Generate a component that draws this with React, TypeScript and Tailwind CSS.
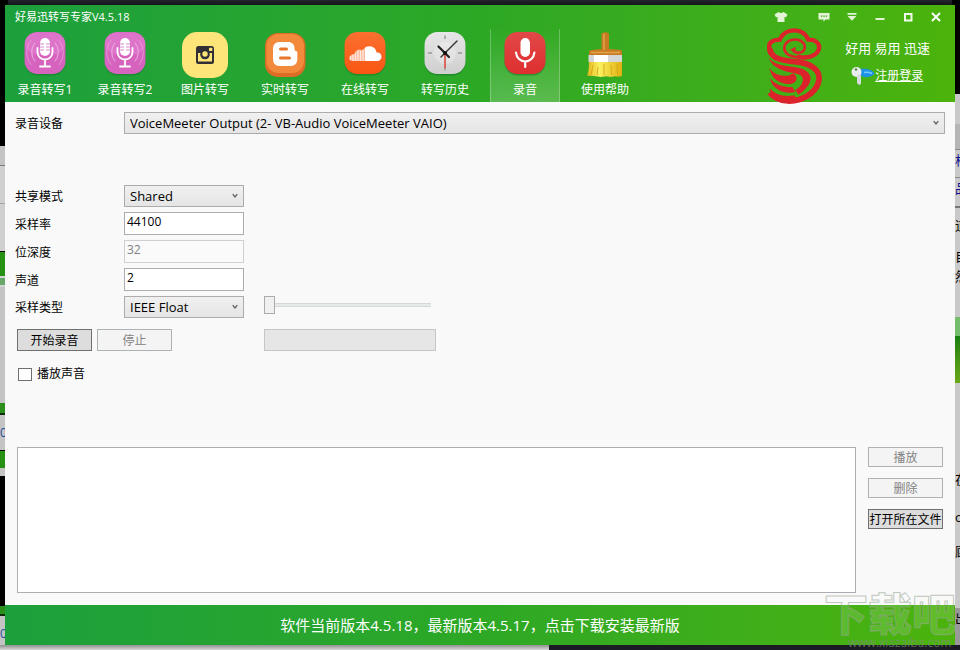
import React from "react";

interface NavItem {
  label: string;
  icon: React.ReactNode;
  active?: boolean;
}

const StudioMicIcon = () => (
  <svg viewBox="0 0 48 47" className="w-12 h-[47px]" fill="none">
    <rect x="3.5" y="2.5" width="41" height="42" rx="13" fill="#15702b" opacity=".45" />
    <rect x="3.5" y="1" width="41" height="42" rx="13" fill="#d664bf" />
    <rect x="4" y="1.5" width="40" height="22" rx="12" fill="#dd74c9" />
    <g stroke="#ecaee0" strokeWidth="1.1" strokeLinecap="round" opacity=".8">
      <path d="M14 12a14 14 0 0 0 0 18M34 12a14 14 0 0 1 0 18" />
      <path d="M10 9.500a19 19 0 0 0 0 24M38 9.500a19 19 0 0 1 0 24" opacity=".7" />
    </g>
    <rect x="19" y="7" width="10" height="18" rx="5" fill="#fff" />
    <path d="M19 13h4M19 16h4M19 19h4M25 13h4M25 16h4M25 19h4" stroke="#d98acb" strokeWidth="1" />
    <path d="M16.500 17v4a7.500 7.500 0 0 0 15 0v-4M24 29v6M19 35.500h10" stroke="#fff" strokeWidth="1.800" strokeLinecap="round" />
  </svg>
);

const PhotoIcon = () => (
  <svg viewBox="0 0 48 47" className="w-12 h-[47px]">
    <rect x="1" y="1" width="46" height="46" rx="15" fill="#fee57a" />
    <rect x="15" y="15" width="18" height="18" rx="2.500" fill="#2f2f35" />
    <path d="M17 22h3.200a4.200 4.200 0 1 0 7.600 0H31v8.500H17z" fill="#fee57a" />
    <circle cx="24" cy="23.500" r="4.800" fill="#2f2f35" />
    <circle cx="24" cy="23" r="2.700" fill="#fee57a" />
    <rect x="28" y="16.800" width="3.300" height="3.300" rx=".5" fill="#fee57a" />
  </svg>
);

const BloggerIcon = () => (
  <svg viewBox="0 0 48 47" className="w-12 h-[47px]">
    <rect x="4" y="2" width="40.500" height="44" rx="13" fill="#dc6c26" />
    <rect x="5.500" y="3" width="37.500" height="39" rx="12" fill="#f28a3c" />
    <path d="M19 11h8c4 0 6.500 2.500 6.500 6 0 2.500.5 3 2 3.200.7.200.8.600.8 1.300V28c0 4.500-2.500 7-7 7H19c-4.500 0-7-2.500-7-7V18c0-4.500 2.500-7 7-7z" fill="#fff" />
    <path d="M19.500 18h6M19.500 27h9" stroke="#e9772b" strokeWidth="3" strokeLinecap="round" />
  </svg>
);

const CloudIcon = () => (
  <svg viewBox="0 0 48 47" className="w-12 h-[47px]">
    <defs>
      <linearGradient id="cloudBg" x1="0" y1="0" x2="0" y2="1">
        <stop stopColor="#fb7030" />
        <stop offset="1" stopColor="#fa5512" />
      </linearGradient>
    </defs>
    <rect x="3.500" y="2.500" width="41" height="42" rx="13" fill="#15702b" opacity=".45" />
    <rect x="3.500" y="1" width="41" height="42" rx="13" fill="url(#cloudBg)" />
    <path d="M24 16.500c5-3 11-.5 11.500 5 3-.5 5 1.500 5 4.200S38.200 30 36 30H24z" fill="#fff" />
    <path d="M10 24c1-1 2.500-1 3.500-1 .5-4 5-5.500 8-3.500L24 16.500V30H11c-3 0-3.500-4-1-6z" fill="#fff" opacity=".55" />
    <path d="M9.500 25v4M12 24v6M14.500 22v8M17 19.500V30M19.500 20V30M22 18.500V30" stroke="#fff" strokeWidth="1.300" opacity=".7" />
  </svg>
);

const ClockIcon = () => (
  <svg viewBox="0 0 48 47" className="w-12 h-[47px]" fill="none">
    <defs>
      <linearGradient id="clockBg" x1="0" y1="0" x2="0" y2="1">
        <stop stopColor="#e6e6e6" />
        <stop offset="1" stopColor="#cfcfcf" />
      </linearGradient>
    </defs>
    <rect x="3.500" y="2.500" width="41" height="42" rx="13" fill="#15702b" opacity=".5" />
    <rect x="3.500" y="1" width="41" height="42" rx="13" fill="url(#clockBg)" />
    <circle cx="24" cy="22" r="11" fill="#fff" opacity=".25" />
    <path d="M24 4.500V8M24 36v3.500M7 22h4M37 22h4" stroke="#999" strokeWidth="1.500" />
    <path d="M24 22v15" stroke="#dd4a43" strokeWidth="1.600" />
    <path d="M20 26 36 10" stroke="#3b3b3b" strokeWidth="1.500" strokeLinecap="round" />
    <path d="m28 26-10.500-10.500" stroke="#222" strokeWidth="2.200" strokeLinecap="round" />
    <circle cx="24" cy="22" r="2" fill="#111" />
  </svg>
);

const RecordIcon = () => (
  <svg viewBox="0 0 48 47" className="w-12 h-[47px]" fill="none">
    <defs>
      <linearGradient id="recordBg" x1="0" y1="0" x2="0" y2="1">
        <stop stopColor="#e24848" />
        <stop offset="1" stopColor="#de2f2f" />
      </linearGradient>
    </defs>
    <rect x="3.500" y="2.500" width="41" height="42" rx="13" fill="#15702b" opacity=".5" />
    <rect x="3.500" y="1" width="41" height="42" rx="13" fill="url(#recordBg)" />
    <rect x="19.500" y="7" width="9.500" height="19" rx="4.700" fill="#fff" />
    <path d="M15 21.500c.5 5.500 4.500 9 9.200 9s8.700-3.500 9.200-9M24.200 31v5" stroke="#fff" strokeWidth="2.200" strokeLinecap="round" />
  </svg>
);

const BrushIcon = () => (
  <svg viewBox="0 0 48 47" className="w-12 h-[47px]">
    <defs>
      <linearGradient id="bristle" x1="0" y1="0" x2="1" y2="0">
        <stop stopColor="#e3b41c" />
        <stop offset=".35" stopColor="#fbf060" />
        <stop offset="1" stopColor="#e0b010" />
      </linearGradient>
    </defs>
    <path d="M20.500 2.500Q24 0 28 2.500v15.500l12 1q1 0 1 2v3.500H8V21q0-2 3-2l9.500-1z" fill="#c87c22" />
    <path d="M23 3v16M10 21.500h29" stroke="#e2a24c" strokeWidth="1.500" />
    <path d="M8 30.500h33V45q-4 1-7 .3l-4 .7-5-.7-5 .7-5-.8-9-.7q2-3 2-14z" fill="url(#bristle)" />
    <path d="M12 34 10 44M17 36l-1 8M23 33v11M30 34l.5 10M36 33l.5 11" stroke="#d2a010" strokeWidth=".8" />
    <rect x="7.500" y="24" width="33.500" height="7" fill="#d4d6d8" />
    <rect x="13" y="24" width="14" height="7" fill="#fff" />
  </svg>
);

const BrandLogo = () => (
  <svg viewBox="10 6 168 228" className="w-14 h-[76px] shrink-0" fill="none" stroke="#dc232b">
    <path d="M24 78C8 58 18 42 48 41 58 18 74 13 92 13 112 13 126 22 134 41 164 41 174 62 160 80 148 94 122 96 100 93" strokeWidth="13" />
    <path d="M102 93C72 92 60 78 62 63 66 43 92 36 110 44 130 55 126 76 108 80 98 82 92 78 88 74" strokeWidth="8" />
    <path d="m78 72 18-10-1 9 6 9z" fill="#dc232b" stroke="none" />
    <path d="M17 66C22 96 46 102 92 107 146 112 170 134 166 162 160 202 112 227 72 225 44 223 28 212 18 200" strokeWidth="17" />
    <g fill="#dc232b" stroke="none">
      <path d="M14 93C26 114 60 120 92 123 134 128 152 152 134 178 124 192 112 202 104 206L95 192C117 180 124 160 111 148 96 137 30 142 14 93z" />
      <path d="M17 125C30 146 54 150 74 149L88 142C106 153 100 171 82 174 52 175 24 162 17 125z" />
      <path d="M18 156C32 176 62 184 86 183L96 198C64 206 26 192 18 156z" />
      <path d="M18 186C34 206 60 214 92 208L100 220 60 230C38 224 22 210 18 186z" />
    </g>
  </svg>
);

const KeyIcon = () => (
  <svg viewBox="0 0 24 20" className="w-6 h-5 shrink-0">
    <path d="M9 3c7-1 13 1 14.500 4.500C20 12 14 12.500 9 9z" fill="#1c93e4" />
    <path d="M13 6.500q4-1 8 1" stroke="#78c7fa" strokeWidth="1.500" fill="none" />
    <circle cx="5.500" cy="6" r="5" fill="#e9edf0" />
    <path d="m6 9 4-1v10l-2 1-2-2z" fill="#d5dade" />
    <circle cx="5" cy="3.500" r="1.300" fill="#5b8f35" />
  </svg>
);

const navItems: NavItem[] = [
  { label: "录音转写1", icon: <StudioMicIcon /> },
  { label: "录音转写2", icon: <StudioMicIcon /> },
  { label: "图片转写", icon: <PhotoIcon /> },
  { label: "实时转写", icon: <BloggerIcon /> },
  { label: "在线转写", icon: <CloudIcon /> },
  { label: "转写历史", icon: <ClockIcon /> },
  { label: "录音", icon: <RecordIcon />, active: true },
  { label: "使用帮助", icon: <BrushIcon /> },
];

const TitleBar = () => (
  <div className="flex items-center h-6 pl-[10px] pr-[5px]">
    <h1 className="flex-1 text-[11px]">好易迅转写专家V4.5.18</h1>
    <button aria-label="换肤" className="w-7 h-6 flex items-center justify-center mr-[15px]">
      <svg viewBox="0 0 14 12" className="w-[14px] h-3">
        <path d="M4.500 1q2.500 2 5 0l4 2.500-1.500 3-1.500-.7V11h-7V5.800L2 6.500l-1.500-3z" fill="#e2f3d6" />
      </svg>
    </button>
    <button aria-label="反馈" className="w-7 h-6 flex items-center justify-center">
      <svg viewBox="0 0 12 10" className="w-3 h-[10px]">
        <path d="M.5 1h11v6.500H7.500L5.500 9.800V7.500h-5z" fill="#e2f3d6" />
        <path d="M3 4.200h1.300M5.400 4.200h1.300M7.800 4.200h1.300" stroke="#3f9a10" strokeWidth="1.300" />
      </svg>
    </button>
    <button aria-label="菜单" className="w-7 h-6 flex items-center justify-center">
      <svg viewBox="0 0 10 10" className="w-[10px] h-[10px]">
        <path d="M.5 1h9v1.800h-9zM.5 4h9L5 8.800z" fill="#e2f3d6" />
      </svg>
    </button>
    <button aria-label="最小化" className="w-7 h-6 flex items-center justify-center">
      <svg viewBox="0 0 10 10" className="w-[10px] h-[10px]">
        <path d="M.5 6h9v2h-9z" fill="#e2f3d6" />
      </svg>
    </button>
    <button aria-label="最大化" className="w-7 h-6 flex items-center justify-center">
      <svg viewBox="0 0 10 10" className="w-[10px] h-[10px]" fill="none">
        <path d="M2 2h6.500v6.500H2z" stroke="#f1f9ea" strokeWidth="2" />
      </svg>
    </button>
    <button aria-label="关闭" className="w-7 h-6 flex items-center justify-center">
      <svg viewBox="0 0 10 10" className="w-[10px] h-[10px]">
        <path d="m1 1 8 8M9 1 1 9" stroke="#fff" strokeWidth="2" />
      </svg>
    </button>
  </div>
);

const Header = () => (
  <header className="bg-linear-to-r from-[#1ca03c] via-[#2da825] to-[#4bb30a] text-white">
    <TitleBar />
    <div className="flex justify-between h-[73px] pl-[5px] pr-[25px]">
      <nav className="flex gap-[10px]">
        {navItems.map((item) => (
          <button
            key={item.label}
            className={
              item.active
                ? "w-[70px] pt-[2px] flex flex-col items-center border-x border-white/25 bg-linear-to-b from-white/0 to-white/20"
                : "w-[70px] pt-[2px] flex flex-col items-center"
            }
          >
            {item.icon}
            <span className="text-[12px] leading-6 whitespace-nowrap">{item.label}</span>
          </button>
        ))}
      </nav>
      <div className="flex items-center gap-[22px]">
        <BrandLogo />
        <div className="flex flex-col gap-2 pb-2">
          <span className="text-[13px] leading-5 whitespace-nowrap">好用 易用 迅速</span>
          <a href="#login" className="flex items-center pl-[6px] text-[12px] leading-5 underline">
            <KeyIcon />
            注册登录
          </a>
        </div>
      </div>
    </div>
  </header>
);

interface SelectBoxProps {
  id: string;
  value: string;
  className: string;
}

const SelectBox: React.FC<SelectBoxProps> = ({ id, value, className }) => (
  <div className={"relative h-[22px] " + className}>
    <select
      id={id}
      className="block appearance-none w-full h-full pl-[5px] pr-5 text-[13px] leading-5 border border-[#acacac] bg-linear-to-b from-[#f0f0f0] to-[#e5e5e5] text-black"
    >
      <option>{value}</option>
    </select>
    <svg viewBox="0 0 6 6" className="absolute right-[6px] top-2 w-[6px] h-[6px] pointer-events-none" fill="none">
      <path d="m.7 1.200 2.300 2.800 2.300-2.800" stroke="#606060" strokeWidth="1.300" />
    </svg>
  </div>
);

const TextBox = ({ id, value, disabled }: { id: string; value: string; disabled?: boolean }) => (
  <input
    id={id}
    type="text"
    defaultValue={value}
    disabled={disabled}
    className="w-[120px] h-[23px] px-[2px] pb-1 text-[12px] leading-4 border border-[#abadb3] bg-white text-black disabled:border-[#cfd0d2] disabled:bg-[#fafafa] disabled:text-[#808080]"
  />
);

const Row = ({ id, label, children }: { id: string; label: string; children: React.ReactNode }) => (
  <div className="flex items-center">
    <label htmlFor={id} className="w-[109px] shrink-0 pt-[2px] text-[12px] leading-5">
      {label}
    </label>
    {children}
  </div>
);

const activeButton = "border border-[#707070] bg-[#dddddd] pt-px text-black text-[12px] whitespace-nowrap";
const mutedButton = "border border-[#adb2b5] bg-[#f4f4f4] pt-px text-[#838383] text-[12px] whitespace-nowrap";

const RecordForm = () => (
  <section className="px-[10px] pt-[10px]">
    <Row id="device" label="录音设备">
      <SelectBox id="device" value="VoiceMeeter Output (2- VB-Audio VoiceMeeter VAIO)" className="flex-1" />
    </Row>
    <div className="flex flex-col gap-[5px] mt-[51px]">
      <Row id="mode" label="共享模式">
        <SelectBox id="mode" value="Shared" className="w-[120px]" />
      </Row>
      <Row id="rate" label="采样率">
        <TextBox id="rate" value="44100" />
      </Row>
      <Row id="depth" label="位深度">
        <TextBox id="depth" value="32" disabled />
      </Row>
      <Row id="channels" label="声道">
        <TextBox id="channels" value="2" />
      </Row>
      <Row id="sampleType" label="采样类型">
        <SelectBox id="sampleType" value="IEEE Float" className="w-[120px]" />
        <input
          type="range"
          aria-label="音量"
          defaultValue={0}
          className="appearance-none ml-5 mb-1 w-[167px] h-[18px] bg-transparent [&::-webkit-slider-runnable-track]:h-1 [&::-webkit-slider-runnable-track]:border-y [&::-webkit-slider-runnable-track]:border-[#d6d9d9] [&::-webkit-slider-runnable-track]:bg-[#e7eaea] [&::-webkit-slider-thumb]:appearance-none [&::-webkit-slider-thumb]:-mt-2 [&::-webkit-slider-thumb]:w-[11px] [&::-webkit-slider-thumb]:h-[18px] [&::-webkit-slider-thumb]:border [&::-webkit-slider-thumb]:border-[#acacac] [&::-webkit-slider-thumb]:bg-[#f0f0f0]"
        />
      </Row>
    </div>
    <div className="flex items-center mt-[11px] pl-[2px]">
      <button className={"w-[75px] h-[22px] " + activeButton}>开始录音</button>
      <button disabled className={"w-[75px] h-[22px] ml-[5px] " + mutedButton}>
        停止
      </button>
      <progress
        value={0}
        max={100}
        aria-label="录音电平"
        className="appearance-none ml-[92px] w-[172px] h-[22px] border border-[#c6c6c6] bg-[#e6e6e6] [&::-webkit-progress-bar]:bg-[#e6e6e6]"
      />
    </div>
    <label className="flex items-center gap-[5px] mt-[13px] pl-[3px] w-fit text-[12px] leading-5">
      <input type="checkbox" className="appearance-none w-[14px] h-[13px] border border-[#707070] bg-white" />
      播放声音
    </label>
  </section>
);

const Recordings = () => (
  <section className="flex-1 flex gap-3 mt-[63px] pl-3 pr-3 pb-3">
    <ul aria-label="录音文件" className="flex-1 min-h-[120px] border border-[#abadb3] bg-white"></ul>
    <div className="flex flex-col gap-[11px] w-[75px]">
      <button disabled className={"h-5 leading-4 " + mutedButton}>
        播放
      </button>
      <button disabled className={"h-5 leading-4 " + mutedButton}>
        删除
      </button>
      <button className={"h-5 leading-4 " + activeButton}>打开所在文件</button>
    </div>
  </section>
);

// slivers of the desktop that stay visible on both sides of the window
const LeftEdge = () => (
  <div className="w-[5px] shrink-0 overflow-hidden flex flex-col bg-[#c4c4c4] text-[12px] leading-5 text-[#1d4c9a]">
    <div className="h-[141px] bg-black" />
    <div className="h-[20px] border-b border-[#777777]" />
    <div className="h-[38px] bg-[#cfcfcf] border-b border-[#a5a5a5]" />
    <div className="h-[47px] bg-[#cfcfcf]" />
    <div className="h-[25px] bg-[#269012] border-t border-black" />
    <div className="h-[11px] bg-[#68a96a] border-y-2 border-[#d5d5d5]" />
    <div className="h-[116px]" />
    <div className="h-[12px] bg-[#2c8f1c] border-b-2 border-[#0d2c08]" />
    <div className="h-[35px] pt-2">0</div>
    <div className="h-[18px] bg-[#269012] border-t border-black" />
    <div className="h-[8px]" />
    <div className="h-[130px] bg-black" />
    <div className="h-[10px] bg-[#2c8f1c] border-b-2 border-[#0d2c08]" />
    <div className="flex-1 pt-2">0</div>
  </div>
);

const RightEdge = () => (
  <div className="w-[5px] shrink-0 overflow-hidden flex flex-col bg-[#c9c9c9] text-[13px] leading-5 text-black">
    <div className="h-[89px] bg-black" />
    <div className="h-[30px]" />
    <div className="h-[26px] bg-[#b5b5b5] border-b border-[#888888]" />
    <div className="h-[28px] border-b border-[#888888] text-[#10108c]">格</div>
    <div className="h-[30px] border-b-2 border-[#777777] text-[#10108c]">品</div>
    <div className="h-[30px] pt-[7px]">道</div>
    <div className="h-[79px] pt-2">自然</div>
    <div className="h-[19px] bg-[#72bc6c]" />
    <div className="h-[47px] bg-linear-to-b from-[#138010] to-[#68a818]" />
    <div className="h-[86px]" />
    <div className="h-[38px]">在</div>
    <div className="h-[34px]">o</div>
    <div className="h-[67px]">顾</div>
    <div className="flex-1 bg-[#999999]">出</div>
  </div>
);

const Watermark = () => (
  <div aria-hidden="true" className="absolute right-0 bottom-0 w-[136px] pointer-events-none">
    <div className="text-[44px] leading-[44px] font-black text-white/15 [-webkit-text-stroke:1px_rgba(150,165,145,0.6)] whitespace-nowrap">
      下载吧
    </div>
    <div className="pl-[24px] text-[12px] leading-[14px] text-[#7e8c7a]/70 whitespace-nowrap">www.xiazaiba.com</div>
  </div>
);

export default function App() {
  return (
    <div
      lang="zh-CN"
      className="relative min-h-screen flex flex-col overflow-hidden bg-black text-black font-['Open_Sans','Noto_Sans_CJK_SC',sans-serif]"
    >
      <div className="h-[5px] bg-linear-to-b from-[#23242d] to-[#15161b] border-x-8 border-black" />
      <div className="flex-1 flex">
        <LeftEdge />
        <main className="flex-1 min-w-0 flex flex-col bg-[#f9f9f9]">
          <Header />
          <RecordForm />
          <Recordings />
          <footer className="h-10 flex items-center justify-center bg-linear-to-r from-[#1ca03c] via-[#2da825] to-[#4bb30a]">
            <a href="#update" className="text-[15px] text-white">
              软件当前版本4.5.18，最新版本4.5.17，点击下载安装最新版
            </a>
          </footer>
        </main>
        <RightEdge />
      </div>
      <div className="h-[5px] flex">
        <div className="w-4/7 bg-linear-to-b from-[#909090] to-[#d8d8d8]" />
        <div className="flex-1 bg-[#1a1b24]" />
      </div>
      <Watermark />
    </div>
  );
}
